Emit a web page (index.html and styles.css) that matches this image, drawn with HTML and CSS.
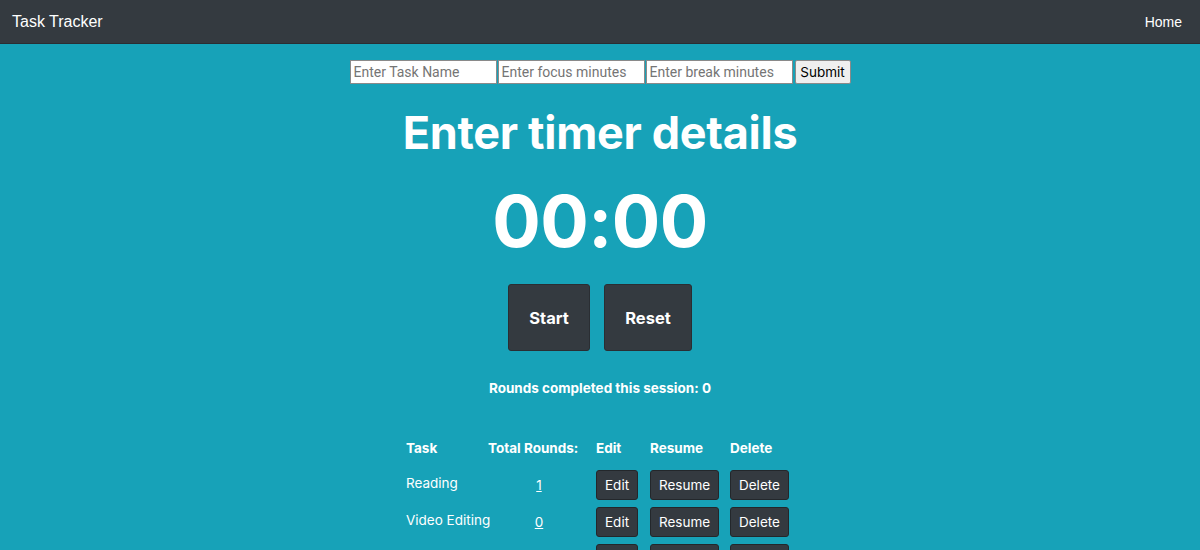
FILE: index.html
```html
<!DOCTYPE html>
<html lang="en">
<head>
<meta charset="utf-8">
<title>Task Tracker</title>
<link rel="stylesheet" href="styles.css">
</head>
<body>
<nav class="navbar">
  <span class="brand">Task Tracker</span>
  <a class="nav-link" href="#">Home</a>
</nav>
<main class="main">
  <form class="task-form">
    <input class="field" type="text" placeholder="Enter Task Name">
    <input class="field" type="text" placeholder="Enter focus minutes">
    <input class="field" type="text" placeholder="Enter break minutes">
    <button class="submit" type="button">Submit</button>
  </form>
  <h1 class="title">Enter timer details</h1>
  <div class="clock">00:00</div>
  <div class="controls">
    <button class="big-btn start" type="button">Start</button>
    <button class="big-btn reset" type="button">Reset</button>
  </div>
  <p class="rounds">Rounds completed this session: 0</p>
  <table class="tasks">
    <thead>
      <tr>
        <th class="c-task">Task</th>
        <th class="c-rounds">Total Rounds:</th>
        <th class="c-edit">Edit</th>
        <th class="c-resume">Resume</th>
        <th class="c-delete">Delete</th>
      </tr>
    </thead>
    <tbody>
      <tr>
        <td>Reading</td>
        <td class="num"><a href="#">1</a></td>
        <td><button class="sm-btn" type="button">Edit</button></td>
        <td><button class="sm-btn" type="button">Resume</button></td>
        <td><button class="sm-btn" type="button">Delete</button></td>
      </tr>
      <tr>
        <td>Video Editing</td>
        <td class="num"><a href="#">0</a></td>
        <td><button class="sm-btn" type="button">Edit</button></td>
        <td><button class="sm-btn" type="button">Resume</button></td>
        <td><button class="sm-btn" type="button">Delete</button></td>
      </tr>
      <tr>
        <td>Writing</td>
        <td class="num"><a href="#">2</a></td>
        <td><button class="sm-btn" type="button">Edit</button></td>
        <td><button class="sm-btn" type="button">Resume</button></td>
        <td><button class="sm-btn" type="button">Delete</button></td>
      </tr>
    </tbody>
  </table>
</main>
</body>
</html>
```
FILE: styles.css
```css
* { box-sizing: border-box; }
html, body {
  margin: 0;
  padding: 0;
  background: #17a2b8;
  color: #fff;
  font-family: Inter, "Noto Sans", sans-serif;
  overflow: hidden;
}
.navbar {
  height: 44px;
  background: #343a40;
  display: flex;
  align-items: center;
  justify-content: space-between;
  padding: 0 18px 0 12px;
  border-bottom: 1px solid #2a2e33;
}
.brand {
  font-family: "Liberation Sans", Arial, sans-serif;
  font-size: 16px;
  color: #fff;
}
.nav-link {
  font-family: "Liberation Sans", Arial, sans-serif;
  font-size: 14px;
  color: #fff;
  text-decoration: none;
}
.main {
  display: flex;
  flex-direction: column;
  align-items: center;
}
.task-form {
  display: flex;
  margin-top: 16px;
  gap: 1px;
  height: 24px;
}
.field {
  width: 147px;
  height: 24px;
  border: 1px solid #8a8a8a;
  border-radius: 0;
  padding: 0 3px;
  font-family: Roboto, sans-serif;
  font-size: 14px;
  color: #222;
  background: #fff;
}
.field::placeholder { color: #757575; }
.submit {
  height: 24px;
  width: 56px;
  margin-left: 1px;
  border: 1px solid #8a8a8a;
  border-radius: 2px;
  background: #efefef;
  color: #000;
  font-family: Inter, sans-serif;
  font-size: 13.5px;
  padding: 0;
}
.title {
  font-size: 45px;
  font-weight: 700;
  margin: 22px 0 0;
  line-height: 54px;
  letter-spacing: -0.3px;
}
.clock {
  font-size: 72px;
  font-weight: 700;
  line-height: 86px;
  margin-top: 18px;
  letter-spacing: -0.5px;
}
.controls {
  display: flex;
  gap: 14px;
  margin-top: 20px;
}
.big-btn {
  height: 67px;
  border: 1px solid #2a2e33;
  border-radius: 3px;
  background: #343a40;
  color: #fff;
  font-family: Inter, sans-serif;
  font-weight: 700;
  font-size: 16.5px;
}
.start { width: 82px; }
.reset { width: 88px; }
.rounds {
  margin: 28px 0 0;
  font-size: 13.5px;
  font-weight: 700;
  line-height: 18px;
}
.tasks {
  margin-top: 32px;
  border-collapse: collapse;
  font-size: 13.5px;
  table-layout: fixed;
  width: 388px;
}
.tasks th {
  text-align: left;
  font-weight: 700;
  height: 37px;
  padding: 0;
  vertical-align: middle;
  white-space: nowrap;
}
.tasks td {
  height: 37px;
  padding: 0;
  vertical-align: middle;
  white-space: nowrap;
}
.c-task { width: 82px; }
.c-rounds { width: 108px; }
.c-edit { width: 54px; }
.c-resume { width: 80px; }
.c-delete { width: 64px; }
.tasks td.num {
  text-align: center;
  padding-right: 6px;
}
.tasks td.num a { color: #fff; }
.tasks td:first-child { padding-bottom: 3px; }
.sm-btn {
  height: 30px;
  padding: 0 8px;
  border: 1px solid #23272b;
  border-radius: 3px;
  background: #343a40;
  color: #fff;
  font-family: Inter, sans-serif;
  font-size: 13.5px;
}
```
